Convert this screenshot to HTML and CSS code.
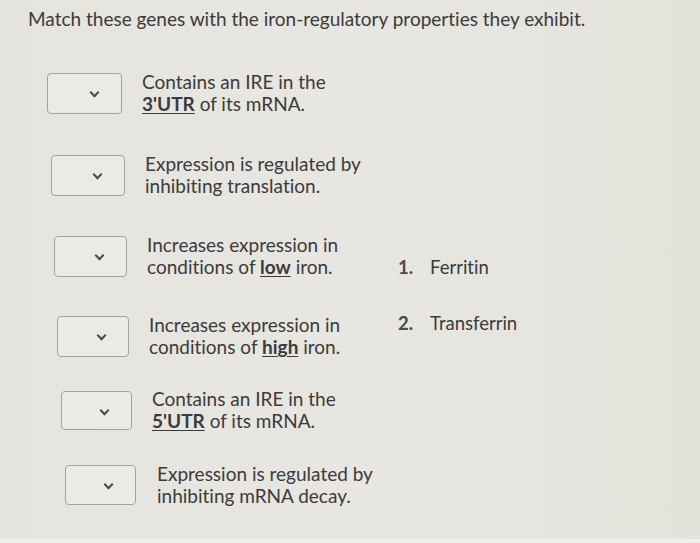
FILE: index.html
```html
<!DOCTYPE html>
<html>
<head>
<meta charset="utf-8">
<link rel="stylesheet" href="styles.css">
</head>
<body>
<div class="page">
  <h1 class="title">Match these genes with the iron-regulatory properties they exhibit.</h1>
  <div class="content">
    <div class="rows">
      <div class="row">
        <div class="select"><span class="chev"></span></div>
        <div class="prompt">Contains an IRE in the<br><u class="em">3'UTR</u> of its mRNA.</div>
      </div>
      <div class="row">
        <div class="select"><span class="chev"></span></div>
        <div class="prompt">Expression is regulated by<br>inhibiting translation.</div>
      </div>
      <div class="row">
        <div class="select"><span class="chev"></span></div>
        <div class="prompt">Increases expression in<br>conditions of <u class="em">low</u> iron.</div>
      </div>
      <div class="row">
        <div class="select"><span class="chev"></span></div>
        <div class="prompt">Increases expression in<br>conditions of <u class="em">high</u> iron.</div>
      </div>
      <div class="row">
        <div class="select"><span class="chev"></span></div>
        <div class="prompt">Contains an IRE in the<br><u class="em">5'UTR</u> of its mRNA.</div>
      </div>
      <div class="row">
        <div class="select"><span class="chev"></span></div>
        <div class="prompt">Expression is regulated by<br>inhibiting mRNA decay.</div>
      </div>
    </div>
    <ol class="answers">
      <li><span class="num">1.</span><span>Ferritin</span></li>
      <li><span class="num">2.</span><span>Transferrin</span></li>
    </ol>
  </div>
</div>
<div class="strip"></div>
</body>
</html>
```
FILE: styles.css
```css
html, body {
  margin: 0;
  padding: 0;
}
body {
  width: 700px;
  height: 543px;
  overflow: hidden;
  background: linear-gradient(90deg, #e6e4df 0%, #e8e6e1 50%, #e3e3dc 100%);
  font-family: Lato, "Open Sans", sans-serif;
  font-variant-ligatures: none;
  color: #3b3b3b;
  position: relative;
}
.page {
  padding: 7px 0 0 28px;
}
.title {
  margin: 0;
  font-size: 19px;
  font-weight: 400;
  line-height: 24px;
  color: #3a3a3a;
}
.content {
  display: flex;
  margin-top: 40px;
}
.rows {
  display: flex;
  flex-direction: column;
  width: 351px;
  margin-left: 19px;
  flex: none;
}
.row {
  display: flex;
  align-items: center;
  gap: 20px;
  height: 44px;
}
.row:nth-child(2) { margin-top: 38px; margin-left: 4px; }
.row:nth-child(3) { margin-top: 37px; margin-left: 7px; }
.row:nth-child(4) { margin-top: 36px; margin-left: 10px; }
.row:nth-child(5) { margin-top: 30px; margin-left: 14px; }
.row:nth-child(6) { margin-top: 31px; margin-left: 18px; }
.select {
  width: 75px;
  height: 41px;
  border: 1px solid #a3a29f;
  border-radius: 4px;
  background: #ebeae6;
  box-sizing: border-box;
  position: relative;
  flex: none;
}
.row:nth-child(2) .select { width: 74px; }
.row:nth-child(3) .select { width: 73px; }
.row:nth-child(4) .select { width: 72px; }
.row:nth-child(5) .select { width: 71px; height: 39px; }
.row:nth-child(6) .select { width: 71px; height: 40px; }
.row:nth-child(6) { gap: 21px; }
.chev {
  position: absolute;
  right: 23px;
  top: 15px;
  width: 5px;
  height: 5px;
  border-right: 2px solid #4a4a4a;
  border-bottom: 2px solid #4a4a4a;
  transform: rotate(45deg);
}
.prompt {
  font-size: 19px;
  line-height: 22px;
  white-space: nowrap;
}
.em {
  font-weight: 700;
  text-decoration-thickness: 1px;
  text-underline-offset: 2px;
}
.answers {
  list-style: none;
  margin: 185px 0 0 0;
  padding: 0;
  font-size: 18.5px;
}
.answers li {
  display: flex;
  height: 22px;
  line-height: 22px;
  margin-bottom: 34px;
}
.num {
  width: 32px;
  font-weight: 700;
  color: #4a4a4a;
}
.strip {
  position: absolute;
  left: 0;
  right: 0;
  bottom: 0;
  height: 4px;
  background: #efefe9;
}
```
